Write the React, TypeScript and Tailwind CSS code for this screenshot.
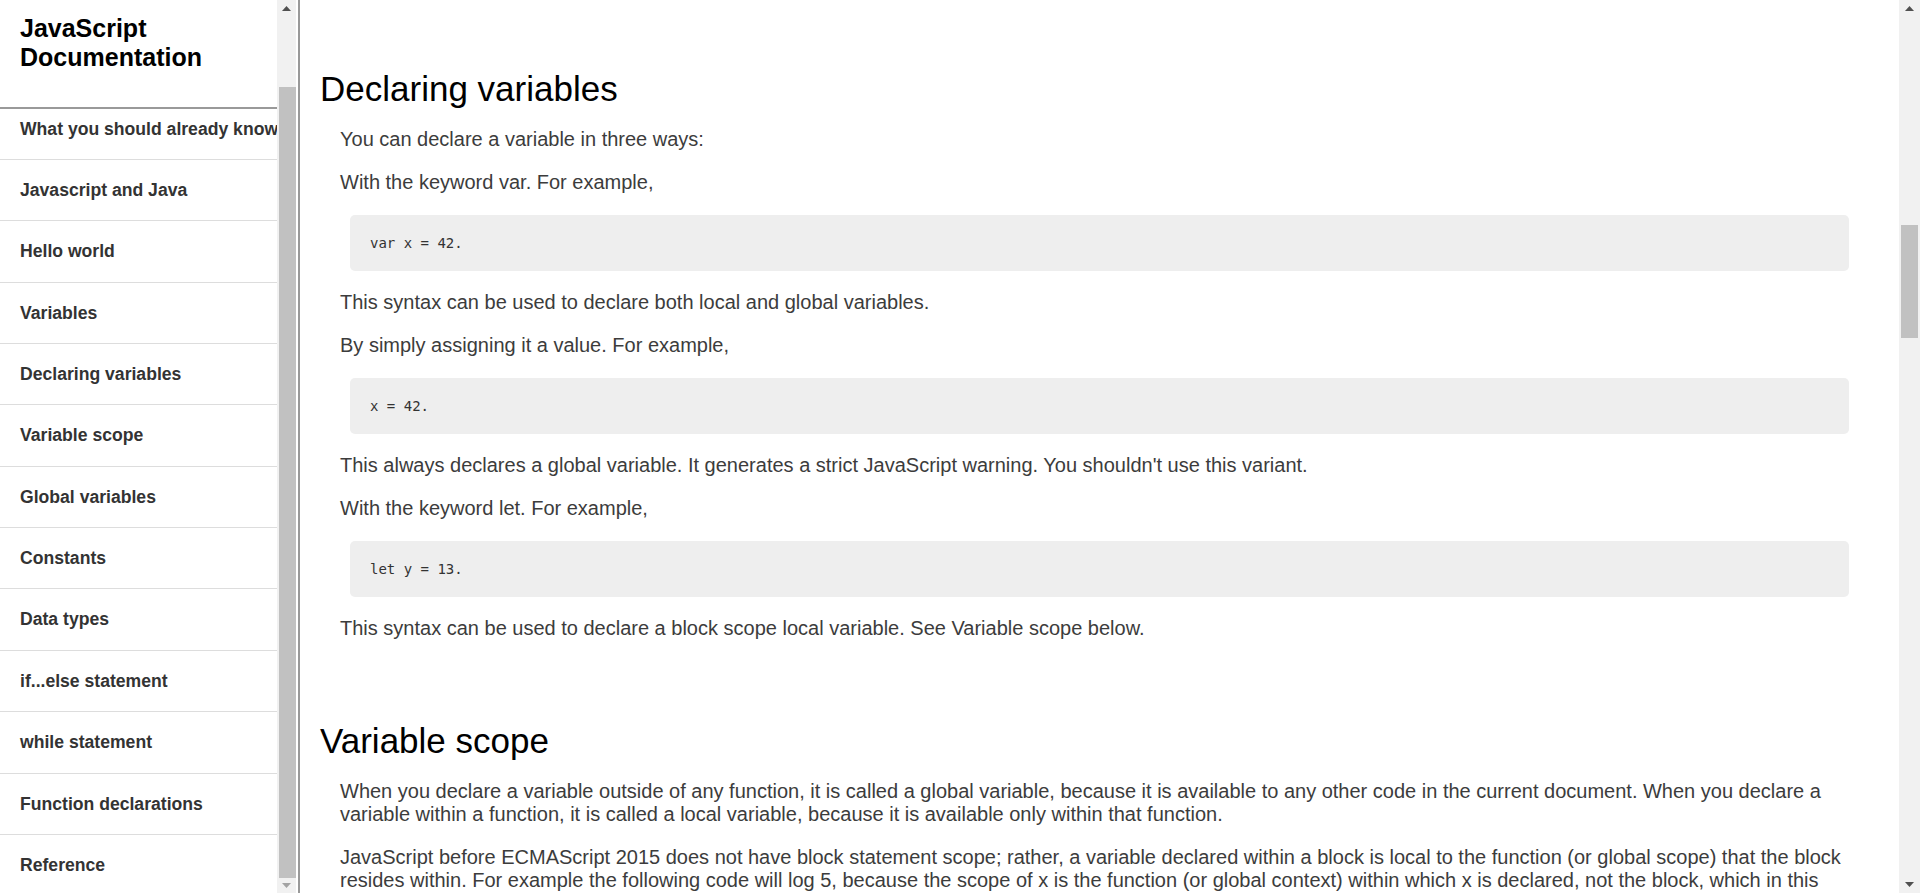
import React from "react";

const navItems = [
  "What you should already know",
  "Javascript and Java",
  "Hello world",
  "Variables",
  "Declaring variables",
  "Variable scope",
  "Global variables",
  "Constants",
  "Data types",
  "if...else statement",
  "while statement",
  "Function declarations",
  "Reference",
];

function ArrowUp({ color }: { color: string }) {
  return (
    <svg width="9" height="5" viewBox="0 0 9 5">
      <polygon points="0,5 9,5 4.5,0" fill={color} />
    </svg>
  );
}

function ArrowDown({ color }: { color: string }) {
  return (
    <svg width="9" height="5" viewBox="0 0 9 5">
      <polygon points="0,0 9,0 4.5,5" fill={color} />
    </svg>
  );
}

function Code({ children }: { children: React.ReactNode }) {
  return (
    <pre className="mx-[10px] mt-[21px] mb-5 rounded-[5px] bg-[#eeeeee] px-5 py-5 font-['DejaVu_Sans_Mono','Liberation_Mono',monospace] text-[14px] leading-[16.3px] text-[#333]">
      {children}
    </pre>
  );
}

export default function App() {
  return (
    <div className="flex h-[893px] w-[1920px] overflow-hidden bg-white font-['Liberation_Sans',Arial,sans-serif]">
      {/* Sidebar */}
      <aside className="flex w-[300px] shrink-0 border-r-2 border-[#999]">
        <div className="flex w-[277px] shrink-0 flex-col overflow-hidden">
          <header className="h-[109px] shrink-0 border-b-2 border-[#999] pl-5 pt-[14px]">
            <h1 className="text-[25px] font-bold leading-[29px] text-black">
              JavaScript
              <br />
              Documentation
            </h1>
          </header>
          <div className="flex-1 overflow-hidden">
            <ul className="mt-[-10.4px]">
              {navItems.map((item) => (
                <li
                  key={item}
                  className="whitespace-nowrap border-b border-[#dddddd] py-5 pl-5 text-[17.6px] font-bold leading-[20.36px] text-[#333]"
                >
                  {item}
                </li>
              ))}
            </ul>
          </div>
        </div>
        {/* sidebar scrollbar */}
        <div className="flex w-[19px] shrink-0 flex-col bg-[#f1f1f1]">
          <div className="flex h-[17px] items-center justify-center">
            <ArrowUp color="#505050" />
          </div>
          <div className="h-[70px]" />
          <div className="ml-[2px] h-[791px] bg-[#c1c1c1]" />
          <div className="flex flex-1 items-center justify-center">
            <ArrowDown color="#a3a3a3" />
          </div>
        </div>
      </aside>

      {/* Main */}
      <main className="flex-1 overflow-hidden px-5 pt-[68.5px]">
        <section>
          <h2 className="mt-0 mb-5 text-[35px] font-normal leading-[39px] text-black">
            Declaring variables
          </h2>
          <div className="mx-5 text-[20px] leading-[23px] text-[#3c3c3c]">
            <p className="my-5">You can declare a variable in three ways:</p>
            <p className="my-5">With the keyword var. For example,</p>
            <Code>var x = 42.</Code>
            <p className="my-5">
              This syntax can be used to declare both local and global variables.
            </p>
            <p className="my-5">By simply assigning it a value. For example,</p>
            <Code>x = 42.</Code>
            <p className="my-5">
              This always declares a global variable. It generates a strict
              JavaScript warning. You shouldn't use this variant.
            </p>
            <p className="my-5">With the keyword let. For example,</p>
            <Code>let y = 13.</Code>
            <p className="my-5">
              This syntax can be used to declare a block scope local variable.
              See Variable scope below.
            </p>
          </div>
        </section>
        <section>
          <h2 className="mt-[81px] mb-5 text-[35px] font-normal leading-[39px] text-black">
            Variable scope
          </h2>
          <div className="mx-5 text-[20px] leading-[23px] text-[#3c3c3c]">
            <p className="my-5">
              When you declare a variable outside of any function, it is called
              a global variable, because it is available to any other code in
              the current document. When you declare a variable within a
              function, it is called a local variable, because it is available
              only within that function.
            </p>
            <p className="my-5">
              JavaScript before ECMAScript 2015 does not have block statement
              scope; rather, a variable declared within a block is local to the
              function (or global scope) that the block resides within. For
              example the following code will log 5, because the scope of x is
              the function (or global context) within which x is declared, not
              the block, which in this case is an if statement.
            </p>
          </div>
        </section>
      </main>

      {/* main scrollbar */}
      <div className="flex w-[21px] shrink-0 flex-col bg-[#f1f1f1]">
        <div className="flex h-[17px] items-center justify-center">
          <ArrowUp color="#505050" />
        </div>
        <div className="h-[208px]" />
        <div className="ml-[1.5px] h-[113px] w-[17px] bg-[#c1c1c1]" />
        <div className="flex-1" />
        <div className="flex h-[17px] items-center justify-center">
          <ArrowDown color="#505050" />
        </div>
      </div>
    </div>
  );
}
